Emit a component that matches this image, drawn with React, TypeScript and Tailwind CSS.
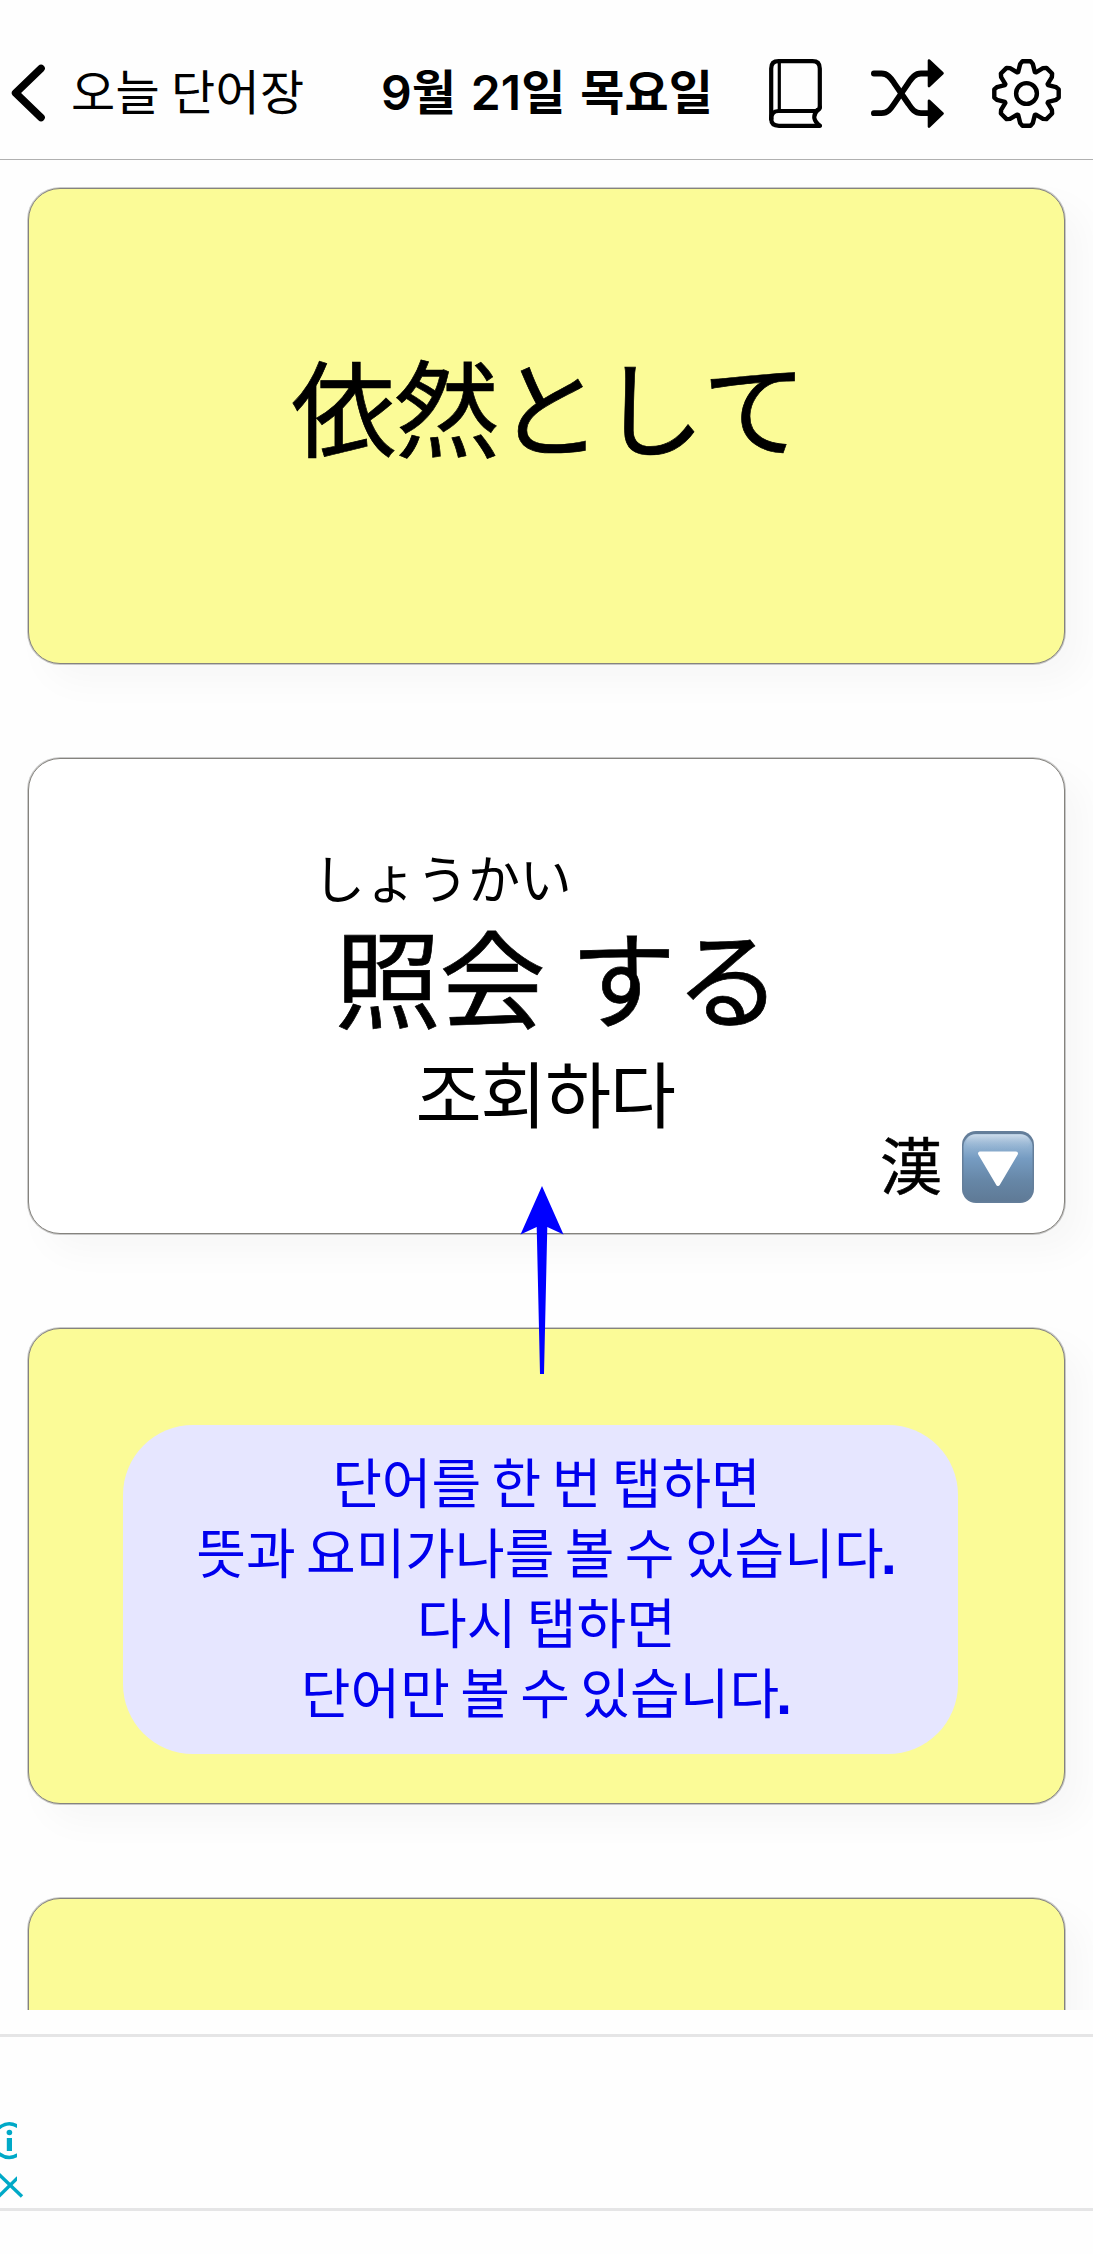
import type { ReactNode } from 'react';

const GEAR_PATH = (() => {
  const c = 34.5;
  const tooth: [number, number][] = [
    [-8.3, -21.6],
    [-6.3, -29.6],
    [-4, -32.2],
    [4, -32.2],
    [6.3, -29.6],
    [8.3, -21.6],
  ];
  const points: string[] = [];
  for (let k = 0; k < 8; k++) {
    const a = (k * Math.PI) / 4;
    for (const [x, y] of tooth) {
      const px = c + x * Math.cos(a) - y * Math.sin(a);
      const py = c + x * Math.sin(a) + y * Math.cos(a);
      points.push(`${px.toFixed(2)} ${py.toFixed(2)}`);
    }
  }
  return `M${points.join('L')}Z`;
})();

function BackIcon() {
  return (
    <svg className="h-[60px] w-[36px] shrink-0" viewBox="0 0 36 60" fill="none" stroke="#000" strokeWidth="7.6" strokeLinecap="round" strokeLinejoin="round">
      <path d="M31 6.500L5.600 31 31 55.500" />
    </svg>
  );
}

function BookIcon() {
  return (
    <svg className="h-[69px] w-[53px] shrink-0" viewBox="0 0 53 69" fill="none" stroke="#000" strokeWidth="4.2" strokeLinecap="round" strokeLinejoin="round">
      <path d="M2.200 60V9.500Q2.200 2.200 9.500 2.200H43.500Q50.800 2.200 50.800 9.500V48.500" />
      <path d="M2.200 60Q2.200 52 9.500 52H47Q51 51 50.800 48" />
      <path d="M2.200 59.500Q2.200 66.800 10 66.800H51Q41 59.500 48.500 51" />
      <path d="M10.300 3V51" strokeWidth="3.2" />
    </svg>
  );
}

function ShuffleIcon() {
  return (
    <svg className="h-[69px] w-[74px] shrink-0" viewBox="0 0 74 69" fill="none" stroke="#000" strokeWidth="5.8" strokeLinecap="round" strokeLinejoin="round">
      <path d="M2.900 14.500H10.500C17 14.500 20 19.500 23 23.800L37.500 45C40.500 49.500 43.500 54.200 50 54.200H58" />
      <path d="M2.900 54.200H10.500C17 54.200 20 49.500 23 45L37.500 23.800C40.500 19.500 43.500 14.500 50 14.500H58" />
      <path d="M58 1.500L71.500 14.300 58 27Z" fill="#000" strokeWidth="2.600" />
      <path d="M58 41.700L71.500 54.500 58 67.500Z" fill="#000" strokeWidth="2.600" />
    </svg>
  );
}

function GearIcon() {
  return (
    <svg className="h-[69px] w-[69px] shrink-0" viewBox="0 0 69 69" fill="none" stroke="#000" strokeWidth="4.400" strokeLinejoin="round">
      <path d={GEAR_PATH} />
      <circle cx="34.500" cy="34.500" r="10.400" />
    </svg>
  );
}

function DownButtonIcon() {
  return (
    <svg className="h-[72px] w-[72px] shrink-0" viewBox="0 0 72 72">
      <defs>
        <linearGradient id="face" x1="0" y1="0" x2="0" y2="1">
          <stop offset="0" stopColor="#a9c3dc" />
          <stop offset="0.200" stopColor="#8fb0d0" />
          <stop offset="0.360" stopColor="#769cc2" />
          <stop offset="0.700" stopColor="#6686a6" />
          <stop offset="1" stopColor="#5f7a96" />
        </linearGradient>
        <linearGradient id="gloss" x1="0" y1="0" x2="0" y2="1">
          <stop offset="0" stopColor="#d6e2ee" stopOpacity="0.800" />
          <stop offset="1" stopColor="#8fb0d0" stopOpacity="0" />
        </linearGradient>
      </defs>
      <rect x="0" y="0" width="72" height="72" rx="14" fill="#647e9a" />
      <rect x="1.500" y="3" width="69" height="67.500" rx="12.500" fill="url(#face)" />
      <rect x="4" y="3.500" width="64" height="15.500" rx="9" fill="url(#gloss)" />
      <path d="M18 22.500H54L36 53Z" fill="#fff" stroke="#fff" strokeWidth="4" strokeLinejoin="round" />
    </svg>
  );
}

function ArrowUp() {
  return (
    <svg className="absolute left-[491px] top-[427px] z-10 h-[190px] w-[44px]" viewBox="0 0 44 190">
      <path d="M22 0L43.500 48.500 27.300 41 24 188H20L16.700 41 .5 48.500Z" fill="#0000ff" />
    </svg>
  );
}

function Card({ filled, children }: { filled?: boolean; children?: ReactNode }) {
  return (
    <section
      className={`relative h-[476px] w-[1037px] shrink-0 rounded-[32px] border border-[#85837e] shadow-[0_0_0_1px_rgba(0,0,0,0.2),18px_18px_36px_rgba(20,20,30,0.03)] ${
        filled ? 'bg-[#fbfb97]' : 'bg-white'
      }`}
    >
      {children}
    </section>
  );
}

function Period() {
  return <span className="-ml-[3px] font-['Liberation_Sans'] text-[58px] font-bold leading-[0px]">.</span>;
}

export default function App() {
  return (
    <div className="flex h-[2254px] w-[1093px] flex-col overflow-hidden bg-[#fefefe] font-['Noto_Sans_CJK_KR',sans-serif] text-black">
      <header className="flex h-[160px] shrink-0 items-start border-b border-[#b0b0b0] pl-[10px] pt-[59px]">
        <div className="mt-[3px]">
          <BackIcon />
        </div>
        <span className="ml-[25px] w-[310px] shrink-0 whitespace-nowrap text-[48px] leading-[60px] tracking-[0.3px]">오늘 단어장</span>
        <h1 className="mt-[4px] w-[388px] shrink-0 whitespace-nowrap font-[Inter,'Noto_Sans_CJK_KR',sans-serif] text-[48px] font-semibold leading-[60px] tracking-[0.1px] [word-spacing:2.6px]">
          9월 21일 목요일
        </h1>
        <div className="flex items-start">
          <BookIcon />
          <div className="ml-[49px]">
            <ShuffleIcon />
          </div>
          <div className="ml-[47px]">
            <GearIcon />
          </div>
        </div>
      </header>

      <main className="flex h-[1850px] shrink-0 flex-col gap-[94px] overflow-hidden pl-[28px] pt-[28px]">
        <Card filled>
          <p className="whitespace-nowrap pl-[6px] pt-[162px] text-center font-['Noto_Sans_CJK_JP',sans-serif] text-[105px] leading-[105px] tracking-[-2.2px] [-webkit-text-stroke:0.7px_#000]">
            依然と<span className="tracking-[0.5px]">して</span>
          </p>
        </Card>

        <Card>
          <div className="flex flex-col whitespace-nowrap pt-[88px]">
            <p className="pl-[284px] font-['Noto_Sans_CJK_JP',sans-serif] text-[52px] leading-[60px] tracking-[-0.3px]">しょうかい</p>
            <p className="mt-[14px] pl-[22px] text-center font-['Noto_Sans_CJK_JP',sans-serif] text-[106px] leading-[106px] tracking-[-1px] [word-spacing:3px] [-webkit-text-stroke:0.7px_#000]">
              照会 する
            </p>
            <p className="mt-[24px] pr-[3px] text-center text-[72px] leading-[80px] tracking-[-1.5px]">조회하다</p>
            <div className="flex items-start justify-end gap-[20px] pr-[30px]">
              <span className="-mt-[4px] font-['Noto_Sans_CJK_JP',sans-serif] text-[62px] leading-[72px] [-webkit-text-stroke:0.5px_#000]">漢</span>
              <DownButtonIcon />
            </div>
          </div>
          <ArrowUp />
        </Card>

        <Card filled>
          <div className="ml-[94px] mt-[96px] h-[329px] w-[835px] whitespace-nowrap rounded-[70px] bg-[#e6e6ff] pl-[12px] pt-[21px] text-center text-[54px] leading-[70px] text-[#0000ee] [word-spacing:-1.7px]">
            <p>단어를 한 번 탭하면</p>
            <p>
              뜻과 요미가나를 볼 수 있습니다
              <Period />
            </p>
            <p>다시 탭하면</p>
            <p>
              단어만 볼 수 있습니다
              <Period />
            </p>
          </div>
        </Card>

        <Card filled />
      </main>

      <footer className="mt-[24px] flex h-[177px] shrink-0 flex-col justify-end border-y-[3px] border-[#e5e5e6]">
        <svg className="h-[88px] w-[26px]" viewBox="0 0 26 88" fill="none" stroke="#00a9c7" strokeWidth="3.400">
          <clipPath id="adEdge">
            <rect x="0" y="0" width="17" height="88" />
          </clipPath>
          <g clipPath="url(#adEdge)">
            <path d="M-4 10.500Q9.300 -3 22.600 10.500M-4 31Q9.300 44 22.600 31" />
            <path d="M-2 77L18 57.500" />
          </g>
          <circle cx="9.400" cy="12.500" r="2.800" fill="#00a9c7" stroke="none" />
          <rect x="6.800" y="18" width="5.200" height="13" fill="#00a9c7" stroke="none" />
          <path d="M-2 53.500L22 76.500" />
        </svg>
      </footer>
    </div>
  );
}
